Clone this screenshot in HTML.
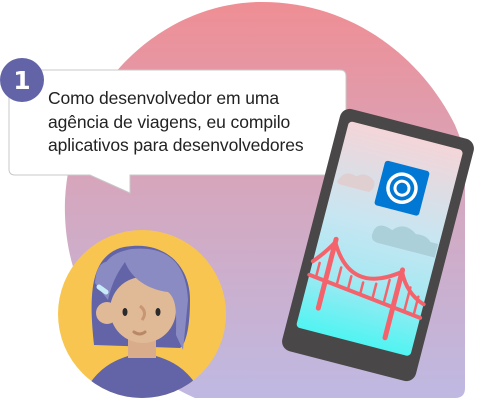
<!DOCTYPE html>
<html><head><meta charset="utf-8"><style>
html,body{margin:0;padding:0;background:#fff;width:481px;height:400px;overflow:hidden}
.t{position:absolute;left:48px;top:87px;font-family:"Liberation Sans",sans-serif;font-size:17.5px;line-height:23.5px;color:#222;white-space:nowrap;letter-spacing:-0.1px}
</style></head><body>
<svg width="481" height="400" style="position:absolute;left:0;top:0">
<defs>
<linearGradient id="bg" x1="0" y1="0" x2="0" y2="1"><stop offset="0" stop-color="#ef8e94"/><stop offset="0.5" stop-color="#d4a8c0"/><stop offset="1" stop-color="#bfb9e2"/></linearGradient>
<linearGradient id="sc" x1="0" y1="0" x2="0" y2="1"><stop offset="0" stop-color="#f4d5d8"/><stop offset="0.45" stop-color="#c6e6f2"/><stop offset="0.7" stop-color="#a8e8f2"/><stop offset="1" stop-color="#50f4f2"/></linearGradient>
<clipPath id="cc"><circle cx="142" cy="314" r="84"/></clipPath>
</defs>
<path d="M465,150 L465,388 Q465,398 455,398 L195,398 C110,360 62,290 65,200 C70,90 160,2 262,2 C350,2 420,55 455,125 Z" fill="url(#bg)"/>
<path d="M15,70 H340 Q346,70 346,76 V169 Q346,175 340,175 H130 V193 L90,175 H15 Q9,175 9,169 V76 Q9,70 15,70 Z" fill="#fff" stroke="#c8c8c8" stroke-width="1"/>
<circle cx="22" cy="80" r="22" fill="#6264a7"/>
<text x="22" y="89" text-anchor="middle" font-family="DejaVu Sans,sans-serif" font-weight="bold" font-size="25" fill="#fff">1</text>
<g transform="translate(378,245) rotate(14.5)">
<rect x="-69" y="-125" width="138" height="250" rx="10" fill="#4a4748"/>
<rect x="-59" y="-113" width="118" height="213" rx="4" fill="url(#sc)"/>
<path d="M-54,-55 q4,-10 16,-6 q8,-8 18,0 q4,6 -2,12 h-28 q-8,0 -4,-6z" fill="#e0cfd0"/>
<path d="M-8,-12 q2,-12 18,-6 q10,-12 24,-2 q10,-2 16,4 h8 v14 h-58 q-10,0 -8,-10z" fill="#acd0da"/>
<rect x="-14" y="-84" width="46" height="46" rx="3" fill="#0078d4"/>
<circle cx="9" cy="-61" r="14" fill="none" stroke="#fff" stroke-width="3.5"/>
<circle cx="9" cy="-61" r="7" fill="none" stroke="#fff" stroke-width="3"/>
<g stroke="#f4636c" fill="none" stroke-linecap="round">
<line x1="-42" y1="5" x2="-42" y2="76" stroke-width="5"/>
<line x1="30" y1="18" x2="30" y2="88" stroke-width="5"/>
<path d="M-59,32 Q-50,22 -42,8 Q-15,55 30,20 Q40,40 59,46" stroke-width="4"/>
<line x1="-59" y1="46" x2="59" y2="60" stroke-width="4"/>
<path d="M-52,32v14 M-30,31v17 M-18,37v13 M-5,40v12 M8,38v15 M20,31v22 M42,33v24 M52,40v18" stroke-width="2.5"/>
</g>
</g>
<circle cx="142" cy="314" r="84" fill="#f8c650"/>
<g clip-path="url(#cc)">
<path d="M94,345 C88,290 92,258 120,248 C160,238 190,262 190,300 C190,330 185,345 180,348 Z" fill="#6264a7"/>
<path d="M80,400 C95,370 110,362 128,356 L156,356 C175,362 190,370 205,400 Z" fill="#6264a7"/>
<rect x="128" y="330" width="28" height="28" fill="#d9ad8c"/>
<circle cx="143" cy="310" r="33" fill="#e0b996"/>
<circle cx="107" cy="313" r="11" fill="#e0b996"/>
<path d="M100,290 C98,262 112,252 132,249 C162,246 186,258 188,300 L183,350 L176,335 C176,318 178,300 168,292 C150,290 132,280 125,262 C118,272 112,282 108,300 Z" fill="#8b8bc4"/>
<path d="M95,283 C96,265 104,260 111,262 C118,266 115,280 105,296 Z" fill="#8b8bc4"/>
<line x1="99" y1="287" x2="106" y2="292" stroke="#c8ecf7" stroke-width="5" stroke-linecap="round"/>
<ellipse cx="125" cy="312" rx="2.5" ry="4" fill="#2b2b2b"/>
<ellipse cx="158" cy="312" rx="2.5" ry="4" fill="#2b2b2b"/>
<path d="M140,306 q8,6 2,14" stroke="#c99674" stroke-width="3" fill="none"/>
<path d="M134,332 q6,4 11,0" stroke="#b98866" stroke-width="3" fill="none" stroke-linecap="round"/>
</g>
</svg>
<div class="t">Como desenvolvedor em uma<br>agência de viagens, eu compilo<br>aplicativos para desenvolvedores</div>
</body></html>
